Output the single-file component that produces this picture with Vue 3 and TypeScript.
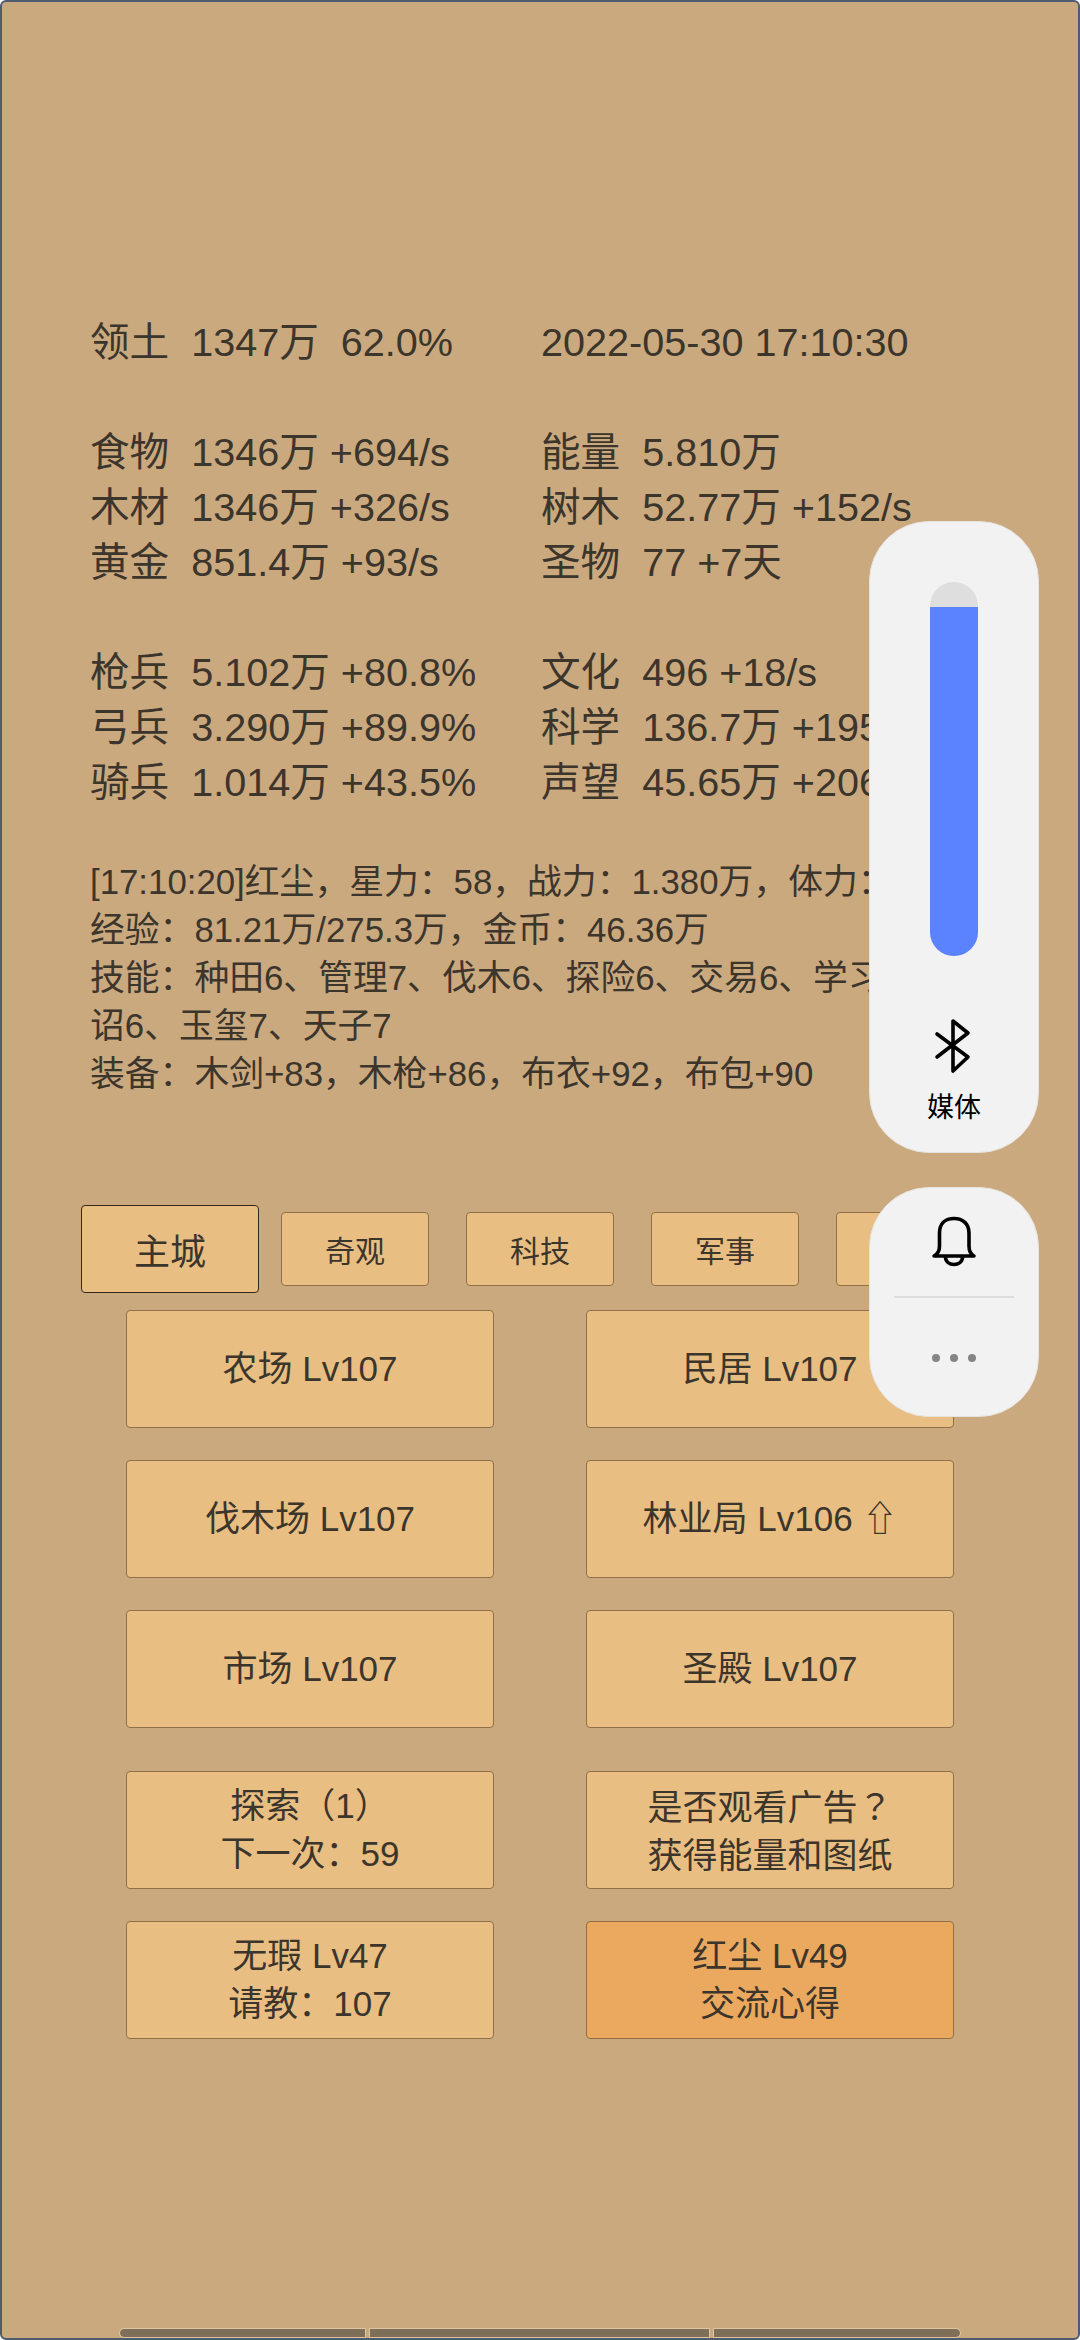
<script setup lang="ts">
interface Stat {
  label: string
  value: string
}

const topLeft: Stat = { label: '领土', value: '1347万  62.0%' }
const resources: Stat[][] = [
  [
    { label: '食物', value: '1346万 +694/s' },
    { label: '木材', value: '1346万 +326/s' },
    { label: '黄金', value: '851.4万 +93/s' },
  ],
  [
    { label: '能量', value: '5.810万' },
    { label: '树木', value: '52.77万 +152/s' },
    { label: '圣物', value: '77 +7天' },
  ],
]
const troops: Stat[][] = [
  [
    { label: '枪兵', value: '5.102万 +80.8%' },
    { label: '弓兵', value: '3.290万 +89.9%' },
    { label: '骑兵', value: '1.014万 +43.5%' },
  ],
  [
    { label: '文化', value: '496 +18/s' },
    { label: '科学', value: '136.7万 +195/s' },
    { label: '声望', value: '45.65万 +206/s' },
  ],
]

const logLines = [
  '[17:10:20]红尘，星力：58，战力：1.380万，体力：',
  '经验：81.21万/275.3万，金币：46.36万',
  '技能：种田6、管理7、伐木6、探险6、交易6、学习',
  '诏6、玉玺7、天子7',
  '装备：木剑+83，木枪+86，布衣+92，布包+90',
]

const tabs = ['奇观', '科技', '军事', '其他']

const buildings = ['农场 Lv107', '民居 Lv107', '伐木场 Lv107', '林业局 Lv106 ⇧', '市场 Lv107', '圣殿 Lv107']
const actions = [
  { lines: ['探索（1）', '下一次：59'], hot: false },
  { lines: ['是否观看广告？', '获得能量和图纸'], hot: false },
  { lines: ['无瑕 Lv47', '请教：107'], hot: false },
  { lines: ['红尘 Lv49', '交流心得'], hot: true },
]

const statText = (s: Stat) => `${s.label}  ${s.value}`
</script>

<template>
  <div class="screen">
    <section class="stats">
      <div class="stat-row">
        <div class="line">{{ statText(topLeft) }}</div>
        <div class="line">2022-05-30 17:10:30</div>
      </div>
      <div class="stat-row block">
        <div v-for="(col, i) in resources" :key="i">
          <div v-for="s in col" :key="s.label" class="line">{{ statText(s) }}</div>
        </div>
      </div>
      <div class="stat-row block">
        <div v-for="(col, i) in troops" :key="i">
          <div v-for="s in col" :key="s.label" class="line">{{ statText(s) }}</div>
        </div>
      </div>
    </section>

    <section class="log">
      <div v-for="l in logLines" :key="l" class="log-line">{{ l }}</div>
    </section>

    <nav class="tabs">
      <button class="tab active">主城</button>
      <button v-for="t in tabs" :key="t" class="tab">{{ t }}</button>
    </nav>

    <section class="grid">
      <button v-for="b in buildings" :key="b" class="btn">{{ b }}</button>
    </section>

    <section class="grid actions">
      <button v-for="a in actions" :key="a.lines[0]" class="btn" :class="{ hot: a.hot }">
        <span v-for="l in a.lines" :key="l" class="btn-line">{{ l.replace('？', '') }}<span v-if="l.endsWith('？')" class="qmark">？</span></span>
      </button>
    </section>

    <div class="gesture">
      <span class="seg"></span>
      <span class="seg"></span>
      <span class="seg"></span>
    </div>

    <!-- system volume panel floats over the game -->
    <aside class="volume">
      <div class="track"><div class="fill"></div></div>
      <svg class="bt" width="40" height="56" viewBox="0 0 40 56" fill="none" stroke="#000" stroke-width="3.6" stroke-linejoin="round" stroke-linecap="round">
        <path d="M3 16 L34 39 L19 53 V3 L34 15 L3 39" />
      </svg>
      <div class="media">媒体</div>
    </aside>
    <aside class="ring">
      <div class="bell-wrap">
        <svg width="48" height="54" viewBox="0 0 48 54" fill="none" stroke="#000" stroke-width="3.6" stroke-linejoin="round" stroke-linecap="round">
          <path d="M4 41 C8 39 9.5 36 9.5 31 V18 C9.5 9 15 3.5 24 3.5 C33 3.5 39 9 39 18 V31 C39 36 40 39 44 41 Z" />
          <path d="M15.5 42 C15.5 52 32.5 52 32.5 42" />
        </svg>
      </div>
      <div class="divider"></div>
      <div class="dots"><i></i><i></i><i></i></div>
    </aside>
  </div>
</template>

<style scoped>
.screen {
  position: relative;
  box-sizing: border-box;
  width: 1080px;
  height: 2340px;
  overflow: hidden;
  background: #caa97f;
  border: 2px solid #4d5a70;
  border-radius: 6px;
  padding-top: 313px;
  color: #3c352c;
  font-family: "Liberation Sans", "Noto Sans CJK SC", sans-serif;
}

.stats {
  padding-left: 88px;
  font-size: 39.6px;
  line-height: 55px;
}

.line {
  white-space: pre;
}

.stat-row {
  display: grid;
  grid-template-columns: 451px 1fr;
}

.block {
  margin-top: 55px;
}

.log {
  margin-top: 48px;
  padding-left: 88px;
  font-size: 34.8px;
  line-height: 48px;
}

.log-line {
  white-space: pre;
}

.tabs {
  display: flex;
  align-items: center;
  gap: 37px;
  margin-top: 107px;
  padding-left: 79px;
}

.tab {
  box-sizing: border-box;
  width: 148px;
  height: 74px;
  padding: 0;
  background: #e9be82;
  border: 1px solid #8f7048;
  border-radius: 4px;
  color: inherit;
  font: inherit;
  font-size: 30px;
}

.tab.active {
  width: 178px;
  height: 88px;
  margin-right: -15px;
  border-color: #33281a;
  font-size: 36px;
}

.grid {
  display: grid;
  grid-template-columns: 368px 368px;
  column-gap: 92px;
  row-gap: 32px;
  padding-left: 124px;
  margin-top: 17px;
}

.actions {
  margin-top: 43px;
}

.btn {
  box-sizing: border-box;
  height: 118px;
  padding: 0;
  background: #e9be82;
  border: 1px solid #8f7048;
  border-radius: 4px;
  color: inherit;
  font: inherit;
  font-size: 35px;
  line-height: 48px;
}

.btn.hot {
  background: #eba85f;
}

.btn-line {
  display: block;
}

.qmark {
  font-family: "Noto Sans CJK TC", sans-serif;
}

.gesture {
  position: absolute;
  left: 118px;
  bottom: 1px;
  display: flex;
  gap: 5px;
}

.seg {
  height: 8px;
  background: #7f6f58;
  outline: 1px solid #dcc5a0;
}

.seg:nth-child(1) {
  width: 245px;
  border-radius: 4px 0 0 4px;
}

.seg:nth-child(2) {
  width: 339px;
}

.seg:nth-child(3) {
  width: 246px;
  border-radius: 0 4px 4px 0;
}

.volume,
.ring {
  position: absolute;
  left: 867px;
  box-sizing: border-box;
  width: 170px;
  background: #f2f2f2;
  border: 1px solid #e6e2dc;
  border-radius: 60px;
}

.volume {
  top: 519px;
  height: 632px;
  display: flex;
  flex-direction: column;
  align-items: center;
  padding-top: 60px;
}

.track {
  width: 48px;
  height: 374px;
  overflow: hidden;
  background: #dedede;
  border-radius: 24px;
}

.fill {
  height: 349px;
  margin-top: 25px;
  background: #5b82ff;
}

.bt {
  margin-top: 62px;
}

.media {
  margin-top: 14px;
  color: #000;
  font-size: 27px;
  line-height: 40px;
}

.ring {
  top: 1185px;
  height: 230px;
}

.bell-wrap {
  display: flex;
  justify-content: center;
  padding-top: 27px;
  height: 81px;
}

.divider {
  height: 2px;
  margin: 0 24px;
  background: #dddddd;
}

.dots {
  display: flex;
  justify-content: center;
  gap: 10px;
  margin-top: 56px;
}

.dots i {
  width: 8px;
  height: 8px;
  border-radius: 50%;
  background: #858585;
}
</style>
